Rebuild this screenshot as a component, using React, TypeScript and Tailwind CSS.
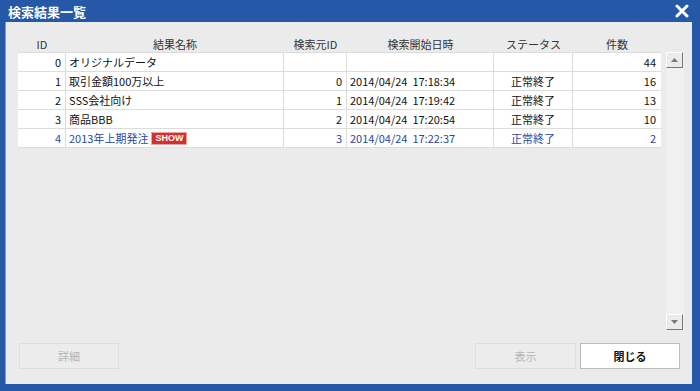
import React from "react";

type Row = { id: string; name: string; src: string; date: string; status: string; count: string; show?: boolean };

const rows: Row[] = [
  { id: "0", name: "オリジナルデータ", src: "", date: "", status: "", count: "44" },
  { id: "1", name: "取引金額100万以上", src: "0", date: "2014/04/24  17:18:34", status: "正常終了", count: "16" },
  { id: "2", name: "SSS会社向け", src: "1", date: "2014/04/24  17:19:42", status: "正常終了", count: "13" },
  { id: "3", name: "商品BBB", src: "2", date: "2014/04/24  17:20:54", status: "正常終了", count: "10" },
  { id: "4", name: "2013年上期発注", src: "3", date: "2014/04/24  17:22:37", status: "正常終了", count: "2", show: true },
];

const font = { fontFamily: '"Noto Sans CJK JP", "Liberation Sans", sans-serif' };

export default function App() {
  return (
    <div className="w-[700px] h-[391px] bg-[#2558a6] flex flex-col overflow-hidden" style={font}>
      {/* title bar */}
      <div className="h-[22px] flex items-center justify-between pl-[8px] pr-[10px] shrink-0">
        <span className="text-white text-[13px] font-bold leading-none">検索結果一覧</span>
        <svg width="16" height="14" viewBox="0 0 16 14">
          <path d="M3 2 L13 12 M13 2 L3 12" stroke="#fff" strokeWidth="3" strokeLinecap="round" />
        </svg>
      </div>

      {/* body */}
      <div className="flex-1 mx-[5px] mb-[7px] mr-[8px] bg-[#ebebeb] border-l border-[#7d9bd0] flex flex-col">
        <div className="flex pt-[15px] pl-[12px]">
          <div className="w-[643px]">
            {/* header */}
            <div className="flex h-[15px] text-[11px] leading-[15px] text-[#333]">
              <div className="w-[48px] text-center">ID</div>
              <div className="w-[218px] text-center">結果名称</div>
              <div className="w-[63px] text-center">検索元ID</div>
              <div className="w-[147px] text-center">検索開始日時</div>
              <div className="w-[79px] text-center">ステータス</div>
              <div className="w-[88px] text-center">件数</div>
            </div>
            {/* rows */}
            <div className="bg-white border-t border-[#dcdcdc]">
              {rows.map((r) => {
                const c = r.show ? "text-[#2a48a0]" : "text-[#111]";
                return (
                  <div key={r.id} className={`flex h-[19px] text-[11px] leading-[18px] border-b border-[#dcdcdc] ${c}`}>
                    <div className="w-[48px] text-right pr-[4px] border-r border-[#dcdcdc]">{r.id}</div>
                    <div className="w-[218px] pl-[3px] border-r border-[#dcdcdc] flex items-center gap-[3px]">
                      <span>{r.name}</span>
                      {r.show && (
                        <span className="bg-[#d6302e] text-white text-[9px] font-bold leading-[11px] px-[3px] border border-[#f3a0a0]" style={{ fontFamily: '"Liberation Sans", sans-serif' }}>
                          SHOW
                        </span>
                      )}
                    </div>
                    <div className="w-[63px] text-right pr-[4px] border-r border-[#dcdcdc]">{r.src}</div>
                    <div className="w-[147px] pl-[3px] whitespace-pre border-r border-[#dcdcdc]">{r.date}</div>
                    <div className="w-[79px] text-center border-r border-[#dcdcdc]">{r.status}</div>
                    <div className="w-[88px] text-right pr-[5px]">{r.count}</div>
                  </div>
                );
              })}
            </div>
          </div>
          {/* scrollbar */}
          <div className="ml-[5px] mt-[15px] w-[18px] h-[278px] bg-[#f0f0f0] flex flex-col justify-between">
            <div className="h-[16px] w-[17px] bg-[#ebebeb] border-r border-b border-[#777] border-t border-l border-t-white border-l-white flex items-center justify-center">
              <svg width="7" height="4" viewBox="0 0 7 4"><path d="M0 4 L3.5 0 L7 4 Z" fill="#777" /></svg>
            </div>
            <div className="h-[16px] w-[17px] bg-[#ebebeb] border-r border-b border-[#777] border-t border-l border-t-white border-l-white flex items-center justify-center">
              <svg width="7" height="4" viewBox="0 0 7 4"><path d="M0 0 L3.5 4 L7 0 Z" fill="#777" /></svg>
            </div>
          </div>
        </div>

        {/* buttons */}
        <div className="mt-auto mb-[15px] flex items-center pl-[13px] pr-[12px] text-[11px]">
          <button className="w-[100px] h-[26px] border border-[#dedede] bg-[#ececec] text-[#b5b5b5]">詳細</button>
          <div className="flex-1" />
          <button className="w-[101px] h-[26px] border border-[#dedede] bg-[#ececec] text-[#b5b5b5]">表示</button>
          <button className="ml-[4px] w-[100px] h-[26px] border border-[#bdbdbd] bg-white text-[#111] font-bold">閉じる</button>
        </div>
      </div>
    </div>
  );
}
